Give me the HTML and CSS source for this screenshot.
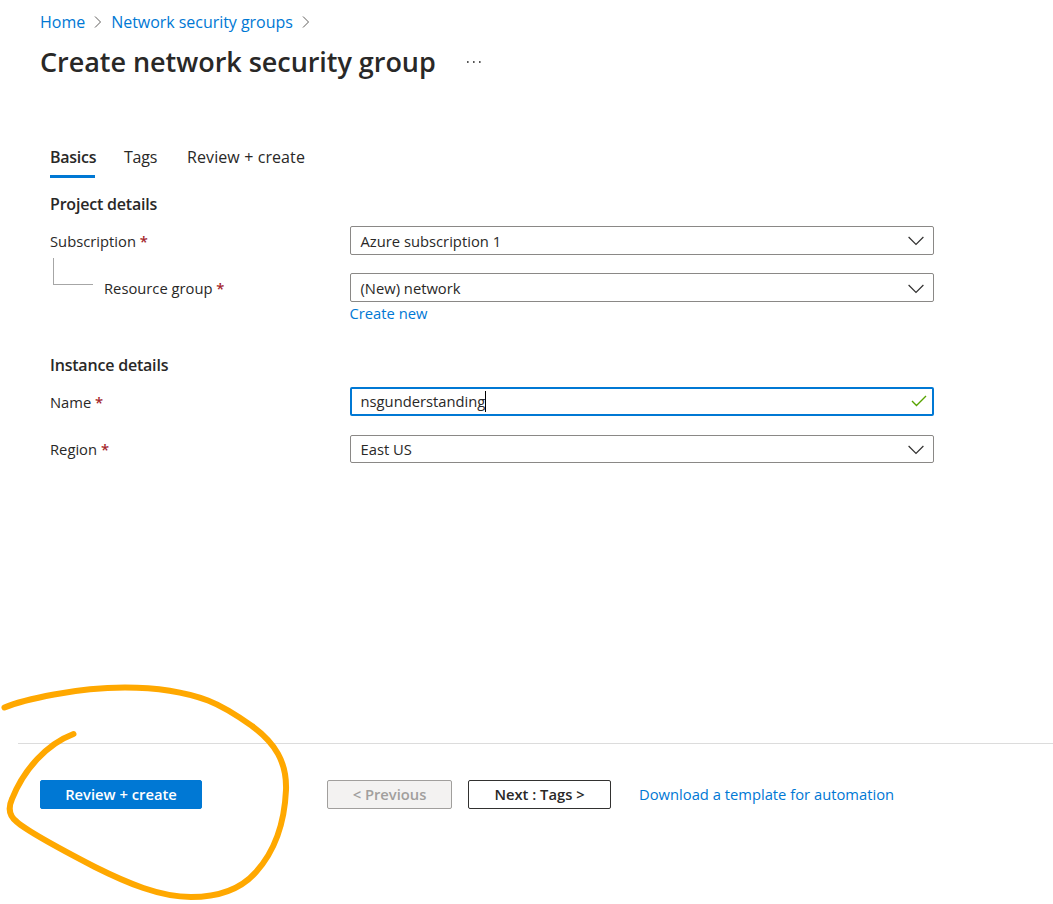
FILE: index.html
```html
<!DOCTYPE html>
<html lang="en">
<head>
<meta charset="utf-8">
<title>Create network security group</title>
<link rel="stylesheet" href="styles.css">
</head>
<body>
<div class="page">
  <header class="header">
    <nav class="breadcrumb">
      <a class="link crumb-home">Home</a>
      <svg class="crumb-arrow" width="8" height="14" viewBox="0 0 8 14"><path d="M1 1.500 6.500 7 1 12.500"/></svg>
      <a class="link crumb-groups">Network security groups</a>
      <svg class="crumb-arrow" width="8" height="14" viewBox="0 0 8 14"><path d="M1 1.500 6.500 7 1 12.500"/></svg>
    </nav>
    <div class="title-row">
      <h1 class="title">Create network security group</h1>
      <svg class="more" width="14" height="2" viewBox="0 0 14 2"><path d="M0 0h1.600v2H0zM6 0h1.600v2H6zM12 0h1.600v2h-1.600z"/></svg>
    </div>
  </header>

  <main class="form">
    <div class="tabs">
      <div class="tab tab-active">Basics</div>
      <div class="tab tab-tags">Tags</div>
      <div class="tab tab-review">Review + create</div>
    </div>

    <h2 class="section project">Project details</h2>
    <div class="row">
      <label class="label">Subscription <span class="required">*</span></label>
      <div class="field"><span class="value">Azure subscription 1</span><svg class="chevron" width="16" height="10" viewBox="0 0 16 10"><path d="M.6 1 8 8.4 15.4 1"/></svg></div>
    </div>
    <div class="row row-group">
      <div class="label label-child"><span class="branch"></span><label class="child-text">Resource group <span class="required">*</span></label></div>
      <div class="field"><span class="value">(New) network</span><svg class="chevron chevron-low" width="16" height="10" viewBox="0 0 16 10"><path d="M.6 1 8 8.4 15.4 1"/></svg></div>
    </div>
    <a class="link create-new">Create new</a>

    <h2 class="section instance">Instance details</h2>
    <div class="row">
      <label class="label">Name <span class="required">*</span></label>
      <div class="field field-focus"><span class="value">nsgunderstanding</span><span class="caret"></span><svg class="check" width="16" height="12" viewBox="0 0 16 12"><path d="M1 6 5.500 10.500 15 1"/></svg></div>
    </div>
    <div class="row row-region">
      <label class="label">Region <span class="required">*</span></label>
      <div class="field"><span class="value">East US</span><svg class="chevron chevron-low" width="16" height="10" viewBox="0 0 16 10"><path d="M.6 1 8 8.4 15.4 1"/></svg></div>
    </div>
  </main>

  <footer class="footer">
    <button class="button primary">Review + create</button>
    <button class="button previous" disabled>&lt; Previous</button>
    <button class="button next">Next : Tags &gt;</button>
    <a class="link download">Download a template for automation</a>
  </footer>

  <svg class="scribble" width="310" height="234" viewBox="0 0 310 234"><path d="M4.500 37.500C20 31 38 27.500 54 24.500C80 19.500 105 17.500 125 17.500C158 17.500 185 22 208 30.500C226 37.500 240 47.500 252 56C275 73 287 92 286 120C284.500 153 274 182 256 202C241 219 219 227 191 227C160 227 127 213 95 197C68 183 26 160 17 152C9 146 8 138 12 129C24 99 47 74 73.500 64"/></svg>
</div>
</body>
</html>
```
FILE: styles.css
```css
* { box-sizing: border-box; }

body {
  margin: 0;
  background: #fff;
  color: #292827;
  font-family: "Open Sans", "Noto Sans", sans-serif;
  font-size: 14.75px;
}

.page {
  position: relative;
  display: flex;
  flex-direction: column;
  height: 904px;
  overflow: hidden;
}

.link { color: #0078d4; }

.header { height: 142px; padding: 10px 0 0 40px; }

.breadcrumb {
  display: flex;
  align-items: center;
  height: 24px;
  font-size: 16px;
}
.crumb-groups { letter-spacing: -0.04px; }
.crumb-arrow { margin: 0 9px; fill: none; stroke: #605e5c; stroke-width: 1; }

.title-row { display: flex; align-items: center; height: 40px; margin-top: 8px; }
.title { margin: 0; font-size: 27px; font-weight: 600; line-height: 40px; width: 427px; white-space: nowrap; letter-spacing: -0.04px; }
.more { fill: #555; }

.form { padding-left: 50px; height: 601px; }

.tabs { display: flex; gap: 29px; height: 36px; font-size: 16px; line-height: 30px; }
.tab { white-space: nowrap; }
.tab-active { width: 45px; border-bottom: 3px solid #0078d4; font-weight: 600; letter-spacing: -0.25px; }
.tab-tags { width: 34px; letter-spacing: -0.2px; }
.tab-review { letter-spacing: 0.1px; }

.section { margin: 0; height: 24px; font-size: 16px; font-weight: 600; line-height: 24px; letter-spacing: -0.2px; }
.project { margin-top: 14px; margin-bottom: 10px; }
.instance { margin-top: 27px; margin-bottom: 10px; }

.row { display: flex; height: 29px; }
.row-group { margin-top: 18px; }
.row-region { margin-top: 19px; height: 28px; }

.label { width: 300px; line-height: 30px; white-space: nowrap; }
.row-region .label { line-height: 28px; }
.required { color: #a4262c; font-weight: 600; }
.label-child { display: flex; }
.branch { width: 40px; height: 27px; margin: -15px 11px 0 3px; border: solid #a6a6a6; border-width: 0 0 1px 1px; }

.field {
  display: flex;
  align-items: center;
  width: 584px;
  padding: 0 9px 0 9.5px;
  border: 1px solid #8a8886;
  border-radius: 2px;
}
.field-focus { padding: 0 5px 2px 8.5px; border: 2px solid #0078d4; }
.value { white-space: nowrap; }
.caret { width: 1px; height: 21px; margin-top: 1px; background: #000; }
.chevron { margin-left: auto; fill: none; stroke: #323130; stroke-width: 1.2; }
.chevron-low { margin-top: 2px; }
.check { margin-left: auto; fill: none; stroke: #57a300; stroke-width: 1.4; }

.create-new { display: block; width: 100px; height: 24px; margin-left: 299.5px; line-height: 22px; }

.footer {
  display: flex;
  align-items: flex-start;
  height: 161px;
  margin-left: 18px;
  padding: 36px 0 0 22px;
  border-top: 1px solid #dcdcdc;
}
.button {
  height: 29px;
  padding: 0 0 2px;
  border: 1px solid #323130;
  border-radius: 2px;
  background: #fff;
  color: #292827;
  font: 600 14.75px "Open Sans", "Noto Sans", sans-serif;
  white-space: nowrap;
}
.primary { width: 162px; border-color: #0078d4; background: #0078d4; color: #fff; }
.previous { width: 125px; margin-left: 125px; border-color: #a19f9d; background: #f3f2f1; color: #a19f9d; }
.next { width: 143px; margin-left: 16px; }
.download { margin-left: 28px; line-height: 29px; white-space: nowrap; }

/* Freehand marker loop drawn over the footer. */
.scribble { position: absolute; left: 0; top: 670px; fill: none; stroke: #ffa800; stroke-width: 6; stroke-linecap: round; stroke-linejoin: round; }
```
